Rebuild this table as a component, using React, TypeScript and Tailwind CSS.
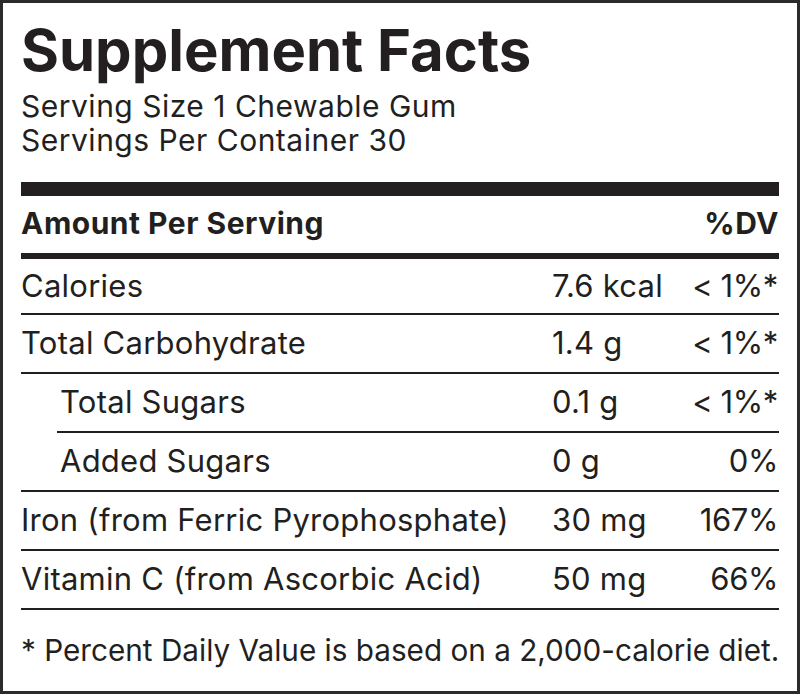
import React from "react";

type Row = { name: string; amount: string; dv: string; indent?: boolean; indentLine?: boolean; first?: boolean };

const rows: Row[] = [
  { name: "Calories", amount: "7.6 kcal", dv: "< 1%*", first: true },
  { name: "Total Carbohydrate", amount: "1.4 g", dv: "< 1%*" },
  { name: "Total Sugars", amount: "0.1 g", dv: "< 1%*", indent: true, indentLine: true },
  { name: "Added Sugars", amount: "0 g", dv: "0%", indent: true },
  { name: "Iron (from Ferric Pyrophosphate)", amount: "30 mg", dv: "167%" },
  { name: "Vitamin C (from Ascorbic Acid)", amount: "50 mg", dv: "66%" },
];

export default function App() {
  return (
    <div
      className="w-[800px] h-[694px] border-[3px] border-[#2b2b2b] bg-white px-[18px] text-[#231f20] overflow-hidden proportional-nums"
      style={{ fontFamily: "Inter, 'Liberation Sans', sans-serif" }}
    >
      <h1 className="text-[58px] font-bold leading-none tracking-[0px] pt-[18px] h-[86px]">Supplement Facts</h1>
      <div className="text-[30px] leading-[34px] tracking-[0.5px]">
        <div>Serving Size 1 Chewable Gum</div>
        <div>Servings Per Container 30</div>
      </div>
      <div className="mt-[25px] h-[14px] bg-[#231f20]" />
      <div className="flex items-center justify-between h-[57px] pb-[3px] text-[30px] font-bold tracking-[0.5px]">
        <span>Amount Per Serving</span>
        <span>%DV</span>
      </div>
      <div className="h-[6px] bg-[#231f20]" />
      {rows.map((r) => (
        <div key={r.name} className={r.indentLine ? "pl-[36px]" : ""}>
          <div
            className={`flex items-center text-[31px] tracking-[0.25px] border-b-2 border-[#231f20] ${r.first ? "h-[56px]" : "h-[59px]"}`}
          >
            <span className={`flex-1 ${r.indent && !r.indentLine ? "pl-[39px]" : r.indentLine ? "pl-[3px]" : ""}`}>{r.name}</span>
            <span className="w-[120px]">{r.amount}</span>
            <span className="w-[107px] text-right tracking-[-0.4px] pr-[1px]">{r.dv}</span>
          </div>
        </div>
      ))}
      <div className="h-[81px] flex items-center text-[29.7px] tracking-[0px] whitespace-nowrap">
        * Percent Daily Value is based on a 2,000-calorie diet.
      </div>
    </div>
  );
}
